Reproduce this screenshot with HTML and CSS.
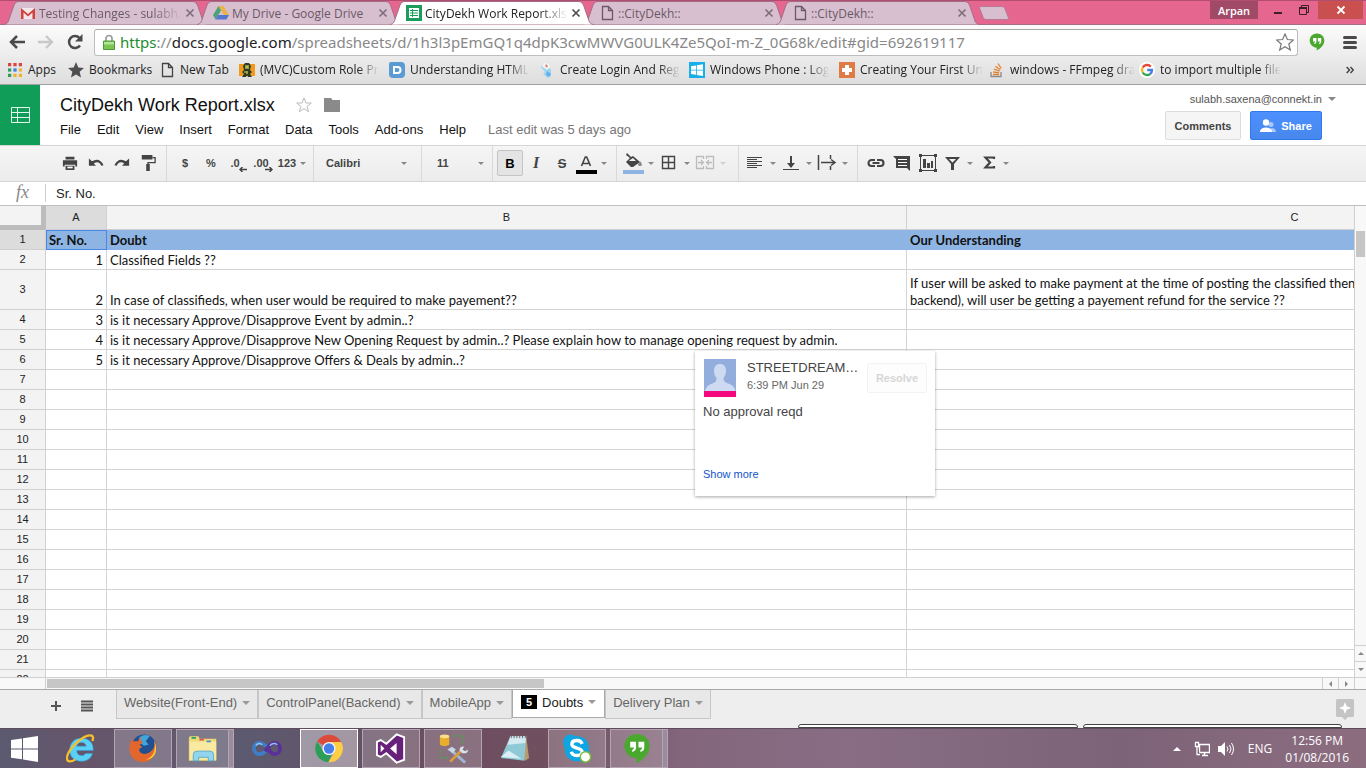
FILE: index.html
```html
<!DOCTYPE html>
<html lang="en">
<head>
<meta charset="utf-8">
<title>CityDekh Work Report.xlsx</title>
<link rel="stylesheet" href="styles.css">
</head>
<body>
<svg class="defs" aria-hidden="true">
  <defs>
    <symbol id="tabshape" viewBox="0 0 204 25" preserveAspectRatio="none"><path d="M0 24.5C4 24 4.500 21 5.500 18L10 5Q11.500 1.500 14 1.500H189Q192 1.500 193.500 5L198 18C199 21 199.500 24 203.500 24.500" stroke="#a56d85"/></symbol>
    <symbol id="cross" viewBox="0 0 10 10"><path d="M1.500 1.500l7 7M8.500 1.500l-7 7" fill="none" stroke="currentColor" stroke-width="1.700"/></symbol>
    <symbol id="page" viewBox="0 0 16 16"><path d="M3.500 1.500h6l4 4v9h-10zM9.500 1.500v4h4" fill="none" stroke="currentColor" stroke-width="1.300"/></symbol>
    <symbol id="bubble" viewBox="0 0 28 32"><path d="M14 1C6.500 1 1 6.500 1 13.500S6.500 26 13.500 26v5C21 28 27 21 27 13.500 27 6.500 21.500 1 14 1z" fill="#4ba82e"/><path d="M7 9h6v6c0 2.500-1.500 4-4 4.500v-2c1.300-.4 1.800-1.300 1.800-2.500H7zM15.500 9h6v6c0 2.500-1.500 4-4 4.500v-2c1.300-.4 1.800-1.300 1.800-2.500h-3.800z" fill="#fff"/></symbol>
  </defs>
</svg>

<header class="browser">
  <div class="tabstrip">
    <nav class="tabs" aria-label="Browser tabs">
      <div class="tab"><svg class="shape"><use href="#tabshape"/></svg>
        <svg class="fav" viewBox="0 0 16 16"><path d="M1 3h14v11H1z" fill="#f1e6ea"/><path d="M1 14V3l7 6 7-6v11h-2.500V7.500L8 11.500l-4.500-4V14z" fill="#d0433c"/></svg>
        <span class="title fade">Testing Changes - sulabh.</span><button class="close" aria-label="Close tab"><svg><use href="#cross"/></svg></button></div>
      <div class="tab"><svg class="shape"><use href="#tabshape"/></svg>
        <svg class="fav" viewBox="0 0 16 16"><path d="M5.500 1h5L16 10h-5z" fill="#e8b44a"/><path d="M5.500 1L0 10l2.500 4.500L8 5.500z" fill="#4da277"/><path d="M5 10h11l-2.500 4.500h-11z" fill="#5677cf"/></svg>
        <span class="title">My Drive - Google Drive</span><button class="close" aria-label="Close tab"><svg><use href="#cross"/></svg></button></div>
      <div class="tab active"><svg class="shape"><use href="#tabshape"/></svg>
        <svg class="fav" viewBox="0 0 16 16"><path d="M0 0h16v16H0z" fill="#1a9d5c"/><path d="M3 3h10v10H3z" fill="#fff"/><path d="M4 5.500h8M4 8h8M4 10.500h8M6.500 4v8" stroke="#1a9d5c"/></svg>
        <span class="title fade">CityDekh Work Report.xls</span><button class="close" aria-label="Close tab"><svg><use href="#cross"/></svg></button></div>
      <div class="tab"><svg class="shape"><use href="#tabshape"/></svg>
        <svg class="fav"><use href="#page"/></svg>
        <span class="title">::CityDekh::</span><button class="close" aria-label="Close tab"><svg><use href="#cross"/></svg></button></div>
      <div class="tab"><svg class="shape"><use href="#tabshape"/></svg>
        <svg class="fav"><use href="#page"/></svg>
        <span class="title">::CityDekh::</span><button class="close" aria-label="Close tab"><svg><use href="#cross"/></svg></button></div>
      <button class="newtab" aria-label="New tab"><svg viewBox="0 0 32 16"><path d="M3 1.500h21q2 0 2.800 2L30.500 13q.5 1.500-1.500 1.500H8q-2 0-2.800-2L1.500 3q-.5-1.500 1.500-1.500z" fill="#d8bfd0" stroke="#b87a97"/></svg></button>
    </nav>
    <div class="winctl">
      <button class="user">Arpan</button>
      <button class="min" aria-label="Minimize"><svg viewBox="0 0 10 10"><path d="M1 7h8v2H1z" fill="#3a1e2a"/></svg></button>
      <button class="max" aria-label="Restore"><svg viewBox="0 0 10 10"><path d="M.5 2.500h7v7h-7zM2.500 2V.500h7v7H8" fill="none" stroke="#3a1e2a"/><path d="M0 2h8v2H0z" fill="#3a1e2a"/></svg></button>
      <button class="quit" aria-label="Close window"><svg viewBox="0 0 10 10"><path d="M1.500 1.500l7 7M8.500 1.500l-7 7" stroke="#fff" stroke-width="1.800"/></svg></button>
    </div>
  </div>

  <div class="navbar">
    <button aria-label="Back"><svg viewBox="0 0 16 16"><path d="M16 8H2M8 2L2 8l6 6" fill="none" stroke="#4a4a4a" stroke-width="2.500"/></svg></button>
    <button aria-label="Forward"><svg viewBox="0 0 16 16"><path d="M0 8h14M8 2l6 6-6 6" fill="none" stroke="#c8c8c8" stroke-width="2.300"/></svg></button>
    <button aria-label="Reload"><svg viewBox="0 0 16 16"><path d="M13 11.500A6 6 0 1 1 12.500 4" fill="none" stroke="#4a4a4a" stroke-width="2.500"/><path d="M15.500 0v7.500H8z" fill="#4a4a4a"/></svg></button>
    <div class="omnibox">
      <svg class="lock" viewBox="0 0 12 16"><path d="M3 8V4.500a3 3 0 0 1 6 0V8" fill="none" stroke="#9a9a9a" stroke-width="1.700"/><path d="M.5 7h11v8.500H.5z" fill="#79c653" stroke="#4c9a35"/><path d="M1 8h10v2.500H1z" fill="#b4e39a"/></svg>
      <div class="url" role="textbox" aria-label="Address" contenteditable="true" spellcheck="false"><span class="secure">https</span>://<span class="host">docs.google.com</span>/spreadsheets/d/1h3l3pEmGQ1q4dpK3cwMWVG0ULK4Ze5QoI-m-Z_0G68k/edit#gid=692619117</div>
      <button class="star" aria-label="Bookmark this page"><svg viewBox="0 0 18 18"><path d="M9 1l2.400 5.500 6 .5-4.600 4 1.500 6L9 13.800 3.700 17l1.500-6L.6 7l6-.5z" fill="#fff" stroke="#777" stroke-width="1.200"/></svg></button>
    </div>
    <button class="ext" aria-label="Hangouts"><svg><use href="#bubble"/></svg></button>
    <button class="burger" aria-label="Menu"><svg viewBox="0 0 14 14"><path d="M1.500 2.500h11M1.500 7.500h11M1.500 12.500h11" stroke="#4a4a4a" stroke-width="3" stroke-linecap="round"/></svg></button>
  </div>

  <nav class="bookmarks" aria-label="Bookmarks">
    <a href="#" class="bm apps"><svg viewBox="0 0 13 13"><path d="M0 0h3v3H0zM5 0h3v3H5zM10 0h3v3h-3z" fill="#d9453d"/><path d="M0 5h3v3H0z" fill="#2f9e5b"/><path d="M5 5h3v3H5z" fill="#3f7de0"/><path d="M10 5h3v3h-3zM5 10h3v3H5zM10 10h3v3h-3z" fill="#eeb22b"/><path d="M0 10h3v3H0z" fill="#2f9e5b"/></svg><span>Apps</span></a>
    <a href="#" class="bm star"><svg viewBox="0 0 14 14"><path d="M7 0l2 4.800 5 .4-3.800 3.400 1.200 5L7 11l-4.400 2.600 1.200-5L0 5.200l5-.4z" fill="#4f4f4f"/></svg><span>Bookmarks</span></a>
    <a href="#" class="bm new"><svg viewBox="0 0 16 16"><use href="#page"/></svg><span>New Tab</span></a>
    <a href="#" class="bm"><svg viewBox="0 0 16 16"><path d="M0 2h16v12H0z" fill="#f39a1c"/><path d="M6 1h4l2 3-1 4 2 2-2 2 2 3H9l-1-2-1 2H3l2-3-2-2 2-2-1-4z" fill="#2e3a22"/><path d="M6 3h4v4H6zM7 9h2v3H7z" fill="#8da04d"/><path d="M7 5h2M5 10h2" stroke="#e8d96a"/></svg><span>(MVC)Custom Role Pr</span></a>
    <a href="#" class="bm"><svg viewBox="0 0 16 16"><path d="M2 0h10a4 4 0 0 1 4 4v8a4 4 0 0 1-4 4H4a4 4 0 0 1-4-4V2a2 2 0 0 1 2-2z" fill="#5b9bd3"/><path d="M5 5h3.500a3 3 0 0 1 0 6H5z" fill="none" stroke="#fff" stroke-width="2"/></svg><span>Understanding HTML</span></a>
    <a href="#" class="bm"><svg viewBox="0 0 16 16"><path d="M1 4l5 2 3-2 3 4v6l-3 2-5-4 2-2z" fill="#9ed3f2"/><path d="M5 1l4 1 2 3-3 3-4-3z" fill="#f4f7fa"/><path d="M7 2l2 2-1 2-2-2z" fill="#dd8a6d"/><path d="M8 9l4 3-2 3-3-2z" fill="#62b0e4"/></svg><span>Create Login And Reg</span></a>
    <a href="#" class="bm"><svg viewBox="0 0 16 16"><path d="M0 0h16v16H0z" fill="#17aeea"/><path d="M2 4.200l5-.8v4.300H2zM7.800 3.200L14 2.200v5.500H7.800zM2 8.500h5v4.200l-5-.8zM7.800 8.500H14V14l-6.200-1z" fill="#fff"/></svg><span>Windows Phone : Log</span></a>
    <a href="#" class="bm"><svg viewBox="0 0 16 16"><path d="M0 0h16v16H0z" fill="#e07b45"/><path d="M6 3h4v3h3v4h-3v3H6v-3H3V6h3z" fill="#fff"/></svg><span>Creating Your First Un</span></a>
    <a href="#" class="bm"><svg viewBox="0 0 16 16"><path d="M2 10v4.500h10V10" fill="none" stroke="#8b8b8b" stroke-width="1.300"/><path d="M4 12.500h6M4.200 10l6 .8M5 7.200l5.600 2M6.500 4.200l4.800 3.600M9 1.500l3.300 5" stroke="#e2822f" stroke-width="1.300"/></svg><span>windows - FFmpeg dra</span></a>
    <a href="#" class="bm"><svg viewBox="0 0 16 16"><circle cx="8" cy="8" r="8" fill="#fff"/><g fill="none" stroke-width="2.400"><path d="M11.800 4.600A5 5 0 0 0 3.700 5.500" stroke="#e2473a"/><path d="M3.700 5.500a5 5 0 0 0 0 5" stroke="#f2b822"/><path d="M3.700 10.500a5 5 0 0 0 7.600 1.300" stroke="#36a455"/><path d="M11.300 11.800A5 5 0 0 0 13 8H8.200" stroke="#4480ea"/></g></svg><span>to import multiple file</span></a>
    <button class="more" aria-label="More bookmarks"><svg viewBox="0 0 8 8"><path d="M.7 1L3.500 4 .7 7M4.500 1l2.800 3-2.800 3" fill="none" stroke="#444" stroke-width="1.500"/></svg></button>
  </nav>
</header>

<section class="dochead">
  <a href="#" class="logo" aria-label="Sheets home"><svg viewBox="0 0 19 16"><path d="M.5.500h18v15H.5zM.5 5.500h18M.5 10.500h18M6.500.500v15" fill="none" stroke="#e4f5ec"/></svg></a>
  <div class="docinfo">
    <div class="titlerow"><h1>CityDekh Work Report.xlsx</h1>
      <button aria-label="Star"><svg viewBox="0 0 16 16"><path d="M8 1l2 5h5.300l-4.200 3.400 1.500 5.300L8 11.600l-4.600 3.100 1.500-5.300L.7 6H6z" fill="none" stroke="#bbb"/></svg></button>
      <button aria-label="Move to folder"><svg viewBox="0 0 16 16"><path d="M0 1h7l1.500 2H16v12H0z" fill="#8a8a8a"/></svg></button>
    </div>
    <nav class="menus"><button>File</button><button>Edit</button><button>View</button><button>Insert</button><button>Format</button><button>Data</button><button>Tools</button><button>Add-ons</button><button>Help</button><a href="#">Last edit was 5 days ago</a></nav>
  </div>
  <div class="account">
    <button class="mail">sulabh.saxena@connekt.in<i class="arrow"></i></button>
    <div class="actions"><button class="comments">Comments</button>
      <button class="share"><svg viewBox="0 0 16 14"><circle cx="11" cy="5.500" r="2.500" fill="#a9c8fb"/><path d="M9 13q1-4 3-4 4 .5 4 4z" fill="#a9c8fb"/><circle cx="6" cy="3.500" r="3.200" fill="#fff"/><path d="M0 13v-1q1-3.500 6-3.500T12 12v1z" fill="#fff"/></svg>Share</button></div>
  </div>
</section>

<div class="toolbar" role="toolbar" aria-label="Formatting">
  <div class="group first">
    <button aria-label="Print"><svg viewBox="0 0 18 18"><path d="M4 2h10v3H4zM1 6h16v7h-2v-2H3v2H1zM4 12h10v5H4z" fill="#444"/><path d="M6 13h6v2H6z" fill="#fff"/></svg></button>
    <button aria-label="Undo"><svg viewBox="0 0 18 18"><path d="M1 4v8h8L6.500 9.500Q12 6 15 12l2.500-.5Q13 2 4.500 7z" fill="#444"/></svg></button>
    <button aria-label="Redo"><svg viewBox="0 0 18 18"><path d="M17 4v8H9l2.500-2.500Q6 6 3 12l-2.500-.5Q5 2 13.500 7z" fill="#444"/></svg></button>
    <button aria-label="Paint format"><svg viewBox="0 0 18 18"><path d="M2 0h12v5H2zM7 10h4v8H7z" fill="#444"/><path d="M14 3h3v5.500H9V10" fill="none" stroke="#444" stroke-width="1.500"/></svg></button>
  </div>
  <div class="group">
    <button>$</button><button>%</button>
    <button aria-label="Decrease decimals" class="dec">.0<svg viewBox="0 0 8 5"><path d="M8 2.500H1M3.500 0L1 2.500 3.500 5" fill="none" stroke="#444" stroke-width="1.500"/></svg></button>
    <button aria-label="Increase decimals" class="dec">.00<svg viewBox="0 0 8 5"><path d="M0 2.500h7M4.500 0L7 2.500 4.500 5" fill="none" stroke="#444" stroke-width="1.500"/></svg></button>
    <button class="fmt">123<i class="arrow"></i></button>
  </div>
  <div class="group pick font"><select aria-label="Font"><option>Calibri</option></select><i class="arrow"></i></div>
  <div class="group pick size"><select aria-label="Font size"><option>11</option></select><i class="arrow"></i></div>
  <div class="group style">
    <button class="on bold">B</button><button class="italic">I</button><button class="strike">S</button>
    <button class="drop" aria-label="Text color"><svg viewBox="0 0 22 22"><path d="M6.500 14L10.300 5h1.400l3.800 9M8 11.500h6" fill="none" stroke="#444" stroke-width="1.600"/><path d="M1 18h21v4H1z"/></svg><i class="arrow"></i></button>
  </div>
  <div class="group wide">
    <button class="drop" aria-label="Fill color"><svg viewBox="0 0 22 22"><path d="M5 1l4 4 2-1 7 6-7 5H9L4 10l4-4-4-3zM8 8l-1 1h7l-3-3z" fill="#444" fill-rule="evenodd"/><path d="M18 9q4 5 0 5t0-5z" fill="#888"/><path d="M1 18h21v4H1z" fill="#8db4e2"/></svg><i class="arrow"></i></button>
    <button class="drop" aria-label="Borders"><svg viewBox="0 0 22 22"><path d="M4.500 4.500h12v12h-12zM10.500 4.500v12M4.500 10.500h12" fill="none" stroke="#444" stroke-width="1.400"/></svg><i class="arrow"></i></button>
    <button class="drop faded" aria-label="Merge cells"><svg viewBox="0 0 22 22"><path d="M9.500 7V4.500h-7v12h7V14M12.500 7V4.500h7v12h-7V14M4 10.500h5M7 8l2.500 2.500L7 13M18 10.500h-5M15 8l-2.500 2.500L15 13" fill="none" stroke="#444" stroke-width="1.300"/></svg><i class="arrow"></i></button>
  </div>
  <div class="group">
    <button class="drop" aria-label="Horizontal align"><svg viewBox="0 0 22 22"><path d="M3 5.500h15M3 7.500h10M3 9.500h15M3 11.500h10M3 13.500h15M3 15.500h10" stroke="#444" stroke-width="1.100"/></svg><i class="arrow"></i></button>
    <button class="drop" aria-label="Vertical align"><svg viewBox="0 0 22 22"><path d="M10 4h2v7h3l-4 5-4-5h3zM3 17h16v1H3z" fill="#444"/></svg><i class="arrow"></i></button>
    <button class="drop" aria-label="Text wrapping"><svg viewBox="0 0 22 22"><path d="M2.500 3v15M14.500 3v4M14.500 14v4M5 10.500h14M15 7.500l4 3-4 3" fill="none" stroke="#444" stroke-width="1.500"/></svg><i class="arrow"></i></button>
  </div>
  <div class="group insert">
    <button aria-label="Insert link"><svg viewBox="0 0 18 18"><path d="M8 6H4.500a3 3 0 0 0 0 6H8M10 6h3.500a3 3 0 0 1 0 6H10M5.500 9h7" fill="none" stroke="#444" stroke-width="2.100"/></svg></button>
    <button aria-label="Insert comment"><svg viewBox="0 0 18 18"><path d="M0 2h17v15l-3-3H3V5z" fill="#444"/><path d="M5 5.500h9M5 8.500h9M5 11.500h9" stroke="#fff"/></svg></button>
    <button aria-label="Insert chart"><svg viewBox="0 0 18 18"><path d="M1.500 1.500h15v15h-15z" fill="none" stroke="#444"/><path d="M4 5h3v9H4zM8 9h3v5H8zM12 7h2v7h-2zM0 0h3v3H0zM15 0h3v3h-3zM0 15h3v3H0zM15 15h3v3h-3z" fill="#444"/></svg></button>
    <button class="drop" aria-label="Filter"><svg viewBox="0 0 22 22"><path d="M4 5h15l-6 7v6h-3v-6zM8 7l3.500 3.500L15 7z" fill="#444" fill-rule="evenodd"/></svg><i class="arrow"></i></button>
    <button class="drop" aria-label="Functions"><svg viewBox="0 0 22 22"><path d="M17 7V5.500H8.500l4.500 5-4.500 5H17V14" fill="none" stroke="#444" stroke-width="2.200"/></svg><i class="arrow"></i></button>
  </div>
</div>

<div class="formula"><label for="fx">fx</label><input id="fx" value="Sr. No."></div>

<main class="sheet">
  <div class="view">
    <table>
      <colgroup><col class="rowno"><col class="a"><col class="b"><col class="c"></colgroup>
      <thead><tr><td class="corner"></td><th class="sel">A</th><th>B</th><th>C</th></tr></thead>
      <tbody>
        <tr class="blue"><th class="sel">1</th><td class="cur">Sr. No.</td><td>Doubt</td><td>Our Understanding</td></tr>
        <tr><th>2</th><td class="n">1</td><td>Classified Fields ??</td><td></td></tr>
        <tr class="tall"><th>3</th><td class="n">2</td><td>In case of classifieds, when user would be required to make payement??</td><td>If user will be asked to make payment at the time of posting the classified then<br>backend), will user be getting a payement refund for the service ??</td></tr>
        <tr><th>4</th><td class="n">3</td><td>is it necessary Approve/Disapprove Event by admin..?</td><td></td></tr>
        <tr><th>5</th><td class="n">4</td><td>is it necessary Approve/Disapprove New Opening Request by admin..? Please explain how to manage opening request by admin.</td><td></td></tr>
        <tr><th>6</th><td class="n">5</td><td>is it necessary Approve/Disapprove Offers &amp; Deals by admin..?</td><td></td></tr>
        <tr><th>7</th><td></td><td></td><td></td></tr>
        <tr><th>8</th><td></td><td></td><td></td></tr>
        <tr><th>9</th><td></td><td></td><td></td></tr>
        <tr><th>10</th><td></td><td></td><td></td></tr>
        <tr><th>11</th><td></td><td></td><td></td></tr>
        <tr><th>12</th><td></td><td></td><td></td></tr>
        <tr><th>13</th><td></td><td></td><td></td></tr>
        <tr><th>14</th><td></td><td></td><td></td></tr>
        <tr><th>15</th><td></td><td></td><td></td></tr>
        <tr><th>16</th><td></td><td></td><td></td></tr>
        <tr><th>17</th><td></td><td></td><td></td></tr>
        <tr><th>18</th><td></td><td></td><td></td></tr>
        <tr><th>19</th><td></td><td></td><td></td></tr>
        <tr><th>20</th><td></td><td></td><td></td></tr>
        <tr><th>21</th><td></td><td></td><td></td></tr>
        <tr><th>22</th><td></td><td></td><td></td></tr>
      </tbody>
    </table>
    <aside class="note">
      <div class="who">
        <svg viewBox="0 0 32 38"><path d="M0 0h32v32H0z" fill="#93aedd"/><path d="M16 5c4 0 6 2.500 6 7 0 3-1 5-2.500 7 0 4 2 4.500 6 6 3 1.200 5 3 6 7H1c1-4 3-5.800 6-7 4-1.500 5.500-2 5.500-6C11 17 10 15 10 12c0-4.500 2-7 6-7z" fill="#cddaf1"/><path d="M0 32h32v6H0z" fill="#f50a7d"/></svg>
        <div class="meta"><b>STREETDREAM…</b><span>6:39 PM Jun 29</span></div>
        <button>Resolve</button>
      </div>
      <p>No approval reqd</p>
      <a href="#">Show more</a>
    </aside>
  </div>
  <div class="vscroll"><div class="thumb"></div><button aria-label="Scroll up"><i class="up"></i></button><button aria-label="Scroll down"><i class="down"></i></button></div>
</main>
<div class="hscroll"><div class="track"><div class="thumb"></div></div><button aria-label="Scroll left"><i class="left"></i></button><button aria-label="Scroll right"><i class="right"></i></button><span class="end"></span></div>

<footer class="sheetbar">
  <button class="tool" aria-label="Add sheet"><svg viewBox="0 0 12 12"><path d="M6 1v10M1 6h10" stroke="#555" stroke-width="2"/></svg></button>
  <button class="tool" aria-label="All sheets"><svg viewBox="0 0 12 12"><path d="M0 1.500h12M0 4.500h12M0 7.500h12M0 10.500h12" stroke="#555" stroke-width="2"/></svg></button>
  <nav class="sheets"><button>Website(Front-End)<i class="arrow"></i></button><button>ControlPanel(Backend)<i class="arrow"></i></button><button>MobileApp<i class="arrow"></i></button><button class="open"><span class="count">5</span>Doubts<i class="arrow"></i></button><button>Delivery Plan<i class="arrow"></i></button></nav>
  <button class="explore" aria-label="Explore"><svg viewBox="0 0 18 21"><path d="M1.500 0h15Q18 0 18 1.500v15q0 1.500-1.500 1.500H12l-3 3-3-3H1.500Q0 18 0 16.500v-15Q0 0 1.500 0z" fill="#c4c4c4"/><path d="M9 3l1.700 4.300L15 9l-4.300 1.700L9 15l-1.700-4.300L3 9l4.300-1.700z" fill="#fff"/></svg></button>
  <div class="peek"><i></i><i></i></div>
</footer>

<div class="taskbar">
  <button class="start" aria-label="Start"><svg viewBox="0 0 27 26"><path d="M0 4l11-1.500V12.500H0zM12 2.300L27 0v12.500H12zM0 13.500h11v9.700L0 21.700zM12 13.500h15V26l-15-2.500z" fill="#fff"/></svg></button>
  <button aria-label="Internet Explorer"><svg viewBox="0 0 32 32"><path d="M29 18H11.500c0 3.500 2 5.500 5 5.500 2 0 3.500-.8 4.300-2.300h7.400c-1.500 5.500-6 8.300-11.700 8.300C9 29.500 4 25 4 17.500S9 5 16.500 5C24.500 5 29.500 10 29 18zM21.500 13.500c-.3-2.500-2-4-4.900-4-2.800 0-4.800 1.500-5.100 4z" fill="#5bd0f7" fill-rule="evenodd" stroke="#2b9fd8" stroke-width=".6"/><path d="M28 8c3-6-2-8-9-4C10 9 1 20 1 26.500c0 4.500 5 4 9 1" fill="none" stroke="#f2c02c" stroke-width="2.400"/></svg></button>
  <button class="run" aria-label="Firefox"><svg viewBox="0 0 32 32"><circle cx="17" cy="14" r="13" fill="#204f92"/><path d="M12 4q6-4 11-1l-4 5 3 4-5 1-4-3z" fill="#3fa6dc"/><path d="M28 7c4 8 2 22-11 23.500C7 31 1 24 1.500 15c.2-4 1.500-7 3-9.500l1.500 3q3-1 5 0c0-2 1-4 3-5-1 3 0 5 2 6l-4 3c2 0 3 1 3 2.500-2 0-3 1-3 3 1 4 7 5 11 2 5-3 6-7 5-13z" fill="#e3672c"/><path d="M28 8c2 10-1 17-9 20 9 0 14-9 9-20z" fill="#f9c638"/></svg></button>
  <button class="run stack" aria-label="File Explorer"><svg viewBox="0 0 34 32"><path d="M1 4l1-2h10l1 3h19v25H1z" fill="#f0d878"/><path d="M2 8h30v21H2z" fill="#fae9a0"/><path d="M4 3h5v2H4z" fill="#22a55a"/><path d="M13 5h5v2h-5z" fill="#d95b46"/><path d="M21 7h5v2h-5z" fill="#4493ce"/><path d="M6 30v-7q0-4 4-4h15q4 0 4 4v7h-6v-4H12v4z" fill="#93d4ee" stroke="#51a8cf"/></svg></button>
  <button aria-label="Visual Studio 2010"><svg viewBox="0 0 32 32"><path d="M17 16c-4-5-6-6-9-6-8 0-8 12 0 12 3 0 5-1 9-6" fill="none" stroke="#3f7cc8" stroke-width="4"/><path d="M14 19c5-7 7-9 10-9 8 0 8 12 0 12-3 0-5-3-9-8" fill="none" stroke="#5a309b" stroke-width="4"/><path d="M4 13q3-4 7-1M19 13q4-4 8-1" stroke="#8fc2ee" fill="none" stroke-width="1.500"/></svg></button>
  <button class="run front" aria-label="Chrome"><svg viewBox="0 0 32 32"><path d="M16 16L3.400 8.500A14.700 14.700 0 0 1 29 9H16z" fill="#dc4a3c"/><path d="M16 9h13a14.700 14.700 0 0 1-13.500 21.700L22 19.500z" fill="#fdcd44"/><path d="M3.400 8.500L10 19.500q4 5 9 2.500l-4 8.700A14.700 14.700 0 0 1 3.400 8.500z" fill="#2c9e57"/><circle cx="16" cy="16" r="7" fill="#f3f3f3"/><circle cx="16" cy="16" r="5.500" fill="#467feb"/></svg></button>
  <button class="run" aria-label="Visual Studio"><svg viewBox="0 0 32 32"><path d="M22 1l8 3v24l-8 3-11-10-6 4-4-2V9l4-2 6 4z" fill="#68217a" stroke="#fff" stroke-width="2"/><path d="M22 10v12l-7-6zM5 12v8l4-4z" fill="#fff"/></svg></button>
  <button class="run" aria-label="SQL tools"><svg viewBox="0 0 32 32"><path d="M2 3v9q5 3 10 0V3z" fill="#e9ae2b"/><ellipse cx="7" cy="3" rx="5" ry="2" fill="#fbe08c"/><path d="M16 2.500h10v9M2.500 18v8H12" fill="none" stroke="#3fae3f" stroke-width="1.500" stroke-dasharray="2 1.500"/><path d="M14 18l15 13" stroke="#9fb6d2" stroke-width="3"/><path d="M10 17l5-3 4 3-3 4z" fill="#c8d7e8"/><path d="M13 30l12-12" stroke="#dc9c3c" stroke-width="3"/><path d="M23 18q0-5 5-4l-2 3 3 2 3-2q0 5-6 4z" fill="#d9e2ee"/></svg></button>
  <button aria-label="Notepad"><svg viewBox="0 0 32 32"><path d="M11 3l17 1 3 22-4 3z" fill="#b89a6d"/><path d="M11 3h17l-2 26-25-3z" fill="#8fc9d6"/><path d="M11 3h17l-1 7L8 12z" fill="#d4eaf0"/><path d="M1 25l8-7 14 9z" fill="#d9eff4"/><path d="M12 2v3M15 2v3M18 2v3M21 2v3M24 2v3M27 2v3" stroke="#666"/></svg></button>
  <button class="run" aria-label="Skype"><svg viewBox="0 0 32 32"><path d="M9 1q3 0 5 2C24 2 30 9 28.500 18c4 7-2 14-9 11.500C10 31 2 25 3 15-1 8 3 1 9 1z" fill="#0da6e3"/><path d="M21.500 11c-1-2.500-3-3.500-5.500-3.500-3.500 0-5.500 1.500-5.500 4 0 5 11 3 11 8 0 2.500-2 4-5.500 4-3 0-5.500-1-6-4" fill="none" stroke="#fff" stroke-width="3.600"/><circle cx="25" cy="25" r="5.500" fill="#fff" stroke="#7ebc34" stroke-width="1.500"/></svg></button>
  <button class="run stack" aria-label="Hangouts"><svg class="talk"><use href="#bubble"/></svg></button>
  <div class="tray">
    <button aria-label="Hidden icons"><i class="up"></i></button>
    <svg viewBox="0 0 16 16"><path d="M5.500 3.500h10v8h-10zM8 14.500h6M10.500 12v2.500" fill="none" stroke="#fff" stroke-width="1.400"/><path d="M1.500 1.500h3v4h-3zM3 6v7.500h3" fill="#6c5668" stroke="#fff" stroke-width="1.300"/></svg>
    <svg viewBox="0 0 16 16"><path d="M0 5h3l4-4v14l-4-4H0z" fill="#fff"/><path d="M9 5.500q2 2.500 0 5M11.500 4q3 4 0 8M13.500 2q4 6 0 12" fill="none" stroke="#fff"/></svg>
    <span class="lang">ENG</span>
    <time>12:56 PM<br>01/08/2016</time>
  </div>
</div>
</body>
</html>
```
FILE: styles.css
```css
* { box-sizing: border-box; }
html, body { height: 100%; margin: 0; }
body {
  display: flex;
  flex-direction: column;
  min-height: 100vh;
  overflow: hidden;
  background: #fff;
  font-family: "Liberation Sans", Arial, sans-serif;
  font-size: 13px;
  color: #222;
}
button, input, select { font: inherit; color: inherit; border: 0; background: none; padding: 0; margin: 0; }
button { display: flex; align-items: center; justify-content: center; white-space: nowrap; }
a { color: inherit; text-decoration: none; }
svg { display: block; flex: none; }
.defs { position: absolute; width: 0; height: 0; }
.arrow { flex: none; width: 0; height: 0; border: 3px solid transparent; border-top-color: #888; border-bottom: 0; }

/* browser chrome */
.browser { flex: none; font-family: "Open Sans", "Noto Sans", sans-serif; font-size: 12px; border-bottom: 1px solid #a0a0a0; }
.tabstrip { display: flex; height: 25px; background: #e5668f; border-top: 1px solid #b14d70; box-shadow: inset 0 -1px #a56d85; }
.tabs { display: flex; flex: 1; min-width: 0; padding-left: 8px; }
.tab { position: relative; display: flex; align-items: center; flex: 0 1 193px; min-width: 0; padding: 0 6px 0 12px; color: #6a5a66; }
.tab .shape { position: absolute; left: -4px; top: -1px; width: 204px; height: 25px; fill: #d8bfd0; }
.tab.active { z-index: 1; color: #222; }
.tab.active .shape { fill: #fff; }
.tab .fav { position: relative; width: 16px; height: 16px; margin-right: 3px; }
.title { position: relative; flex: 1; overflow: hidden; white-space: nowrap; }
.title.fade { mask-image: linear-gradient(90deg, #000 80%, transparent); }
.close { position: relative; width: 10px; height: 10px; margin: 0 0 0 3px; opacity: 0.8; }
.close svg { width: 10px; height: 10px; }
.newtab svg { width: 32px; height: 16px; margin-left: 5px; }
.winctl { display: flex; height: 18px; padding-right: 3px; }
.user { width: 48px; margin-right: 7px; background: #a04a68; color: #fff; font-size: 11px; font-weight: 600; }
.min, .max { width: 26px; }
.quit { width: 45px; margin-left: 1px; background: #c9504f; }
.winctl svg { width: 10px; height: 10px; }

.navbar { display: flex; align-items: center; height: 32px; padding: 2px 8px 0 7px; background: linear-gradient(#fbfbfb, #ececec); }
.navbar > button { width: 20px; margin-right: 9px; }
.navbar > button svg { width: 16px; height: 16px; }
.omnibox { display: flex; align-items: center; flex: 1; height: 27px; min-width: 0; padding: 0 3px 0 8px; background: #fff; border: 1px solid #bdbdbd; border-top-color: #a8a8a8; border-radius: 3px; }
.lock { width: 12px; height: 16px; margin-right: 5px; }
.url { flex: 1; overflow: hidden; white-space: nowrap; font-family: "Noto Sans", sans-serif; font-size: 15px; line-height: 24px; color: #888; outline: 0; }
.secure { color: #1d8d2d; }
.host { color: #222; }
.omnibox .star svg { width: 18px; height: 18px; }
.navbar > .ext { width: 16px; margin: 0 17px 0 11px; }
.navbar > .ext svg { width: 16px; height: 18px; }
.navbar > .burger { width: 16px; margin: 0; }
.navbar > .burger svg { width: 14px; height: 14px; }

.bookmarks { display: flex; align-items: center; height: 27px; padding: 0 8px 2px; background: linear-gradient(#ebebeb, #dedede); color: #222; }
.bm { display: flex; align-items: center; flex: 0 1 150px; min-width: 0; }
.bm svg { width: 16px; height: 16px; margin-right: 5px; }
.bm span { overflow: hidden; white-space: nowrap; mask-image: linear-gradient(90deg, #000 82%, transparent); }
.bm.apps { flex-basis: 60px; }
.bm.star { flex-basis: 91px; }
.bm.new { flex-basis: 80px; color: #444; }
.bm.apps span, .bm.star span, .bm.new span { mask-image: none; color: #222; }
.bm.apps svg { width: 14px; height: 14px; margin-right: 6px; }
.more { margin-left: auto; }
.more svg { width: 8px; height: 8px; margin-right: 4px; }

/* document header */
.dochead { display: flex; flex: none; height: 60px; }
.logo { display: flex; align-items: center; justify-content: center; width: 40px; background: #0f9d58; }
.logo svg { width: 19px; height: 16px; }
.docinfo { flex: 1; padding: 8px 0 0 20px; color: #111; }
.titlerow { display: flex; align-items: center; gap: 12px; height: 24px; }
h1 { margin: 0 9px 0 0; font-size: 18px; font-weight: 400; }
.titlerow svg { width: 16px; height: 16px; }
.menus { display: flex; align-items: center; gap: 16px; height: 24px; white-space: nowrap; }
.menus a { margin-left: 6px; color: #777; }
.account { display: flex; flex-direction: column; align-items: flex-end; padding: 5px 30px 0 0; }
.mail { height: 18px; font-size: 11px; color: #555; }
.mail .arrow { margin-left: 6px; border-width: 4px 4px 0; }
.actions { display: flex; gap: 9px; margin: 3px 14px 0 0; font-size: 11px; font-weight: 700; }
.comments { width: 76px; height: 29px; background: #f5f5f5; border: 1px solid #dcdcdc; border-radius: 2px; color: #444; }
.share { width: 72px; height: 29px; gap: 5px; background: linear-gradient(#4d90fe, #4787ed); border: 1px solid #3079ed; border-radius: 2px; color: #fff; }
.share svg { width: 16px; height: 14px; }

/* formatting toolbar */
.toolbar { display: flex; flex: none; height: 37px; background: linear-gradient(#f5f5f5, #ececec); border: 1px solid #d5d5d5; border-width: 1px 0; color: #444; font-size: 11px; font-weight: 700; }
.group { display: flex; align-items: center; padding: 0 5px 1px; border-left: 1px solid #d9d9d9; }
.group.first { border: 0; padding-left: 57px; }
.group.wide { padding-right: 8px; }
.group button { width: 26px; height: 26px; }
.group button svg { width: 16px; height: 16px; }
.group .fmt { width: 32px; gap: 4px; }
.group .dec { position: relative; padding-right: 4px; }
.group .dec svg { position: absolute; right: 3px; bottom: 4px; width: 8px; height: 5px; }
.group .drop { width: 36px; justify-content: flex-start; }
.insert button svg { width: 18px; height: 18px; }
.group .drop svg { width: 22px; height: 22px; margin-right: 4px; }
.faded { opacity: 0.3; }
.pick { position: relative; }
.pick select { width: 100%; height: 26px; padding-left: 7px; appearance: none; }
.pick .arrow { position: absolute; right: 14px; }
.font { width: 108px; padding-left: 5px; }
.size { width: 71px; padding-left: 8px; }
.size .arrow { right: 8px; }
.group.style { padding-left: 4px; }
.group .on { background: #e4e4e4; border: 1px solid #c4c4c4; border-radius: 2px; color: #000; }
.bold, .strike { font-size: 13px; }
.italic { font-family: "Liberation Serif", serif; font-style: italic; font-size: 16px; }
.strike { text-decoration: line-through; }

.formula { display: flex; flex: none; align-items: center; height: 23px; padding-bottom: 1px; }
.formula label { width: 46px; height: 18px; border-right: 1px solid #ccc; text-align: center; font: italic 18px/16px "Liberation Serif", serif; color: #888; }
.formula input { flex: 1; padding-left: 10px; outline: 0; }

/* grid */
.sheet { display: flex; flex: 1; min-height: 0; border-top: 1px solid #c0c0c0; }
.view { position: relative; flex: 1; min-width: 0; overflow: hidden; }
table { width: 1683px; border-spacing: 0; table-layout: fixed; }
.rowno { width: 46px; }
.a { width: 61px; }
.b { width: 800px; }
.c { width: 776px; }
th { padding: 0; height: 20px; background: #f3f3f3; border: solid #d0d0d0; border-width: 0 1px 1px 0; font-size: 11px; font-weight: 400; line-height: 17px; vertical-align: middle; }
thead th { height: 24px; }
th.sel { background: #dcdcdc; }
td { padding: 0 3px; height: 20px; border: solid #d4d4d4; border-width: 0 1px 1px 0; font-family: Lato, Carlito, sans-serif; font-size: 13px; line-height: 17px; vertical-align: bottom; white-space: nowrap; color: #111; }
.corner { background: #f3f3f3; border: solid #bcbcbc; border-width: 0 5px 5px 0; }
.n { text-align: right; }
.tall td { height: 40px; }
.blue td { background: #8db4e2; border-color: #8db4e2; font-weight: 700; }
.blue td.cur { border-color: #4a86e8; box-shadow: inset 1px 1px #4a86e8; }

.vscroll { display: flex; flex-direction: column; justify-content: flex-end; width: 12px; border-left: 1px solid #d0d0d0; background: #f8f8f8; padding-top: 25px; }
.vscroll .thumb { width: 9px; height: 26px; margin: 0 0 auto 1px; background: #c6c6c6; }
.vscroll button { height: 16px; border-top: 1px solid #d0d0d0; }
.up, .down, .left, .right { border: 3px solid transparent; }
.up { border-bottom-color: #888; border-top: 0; }
.down { border-top-color: #888; border-bottom: 0; }
.left { border-right-color: #888; border-left: 0; }
.right { border-left-color: #888; border-right: 0; }
.hscroll { display: flex; flex: none; height: 13px; background: #f8f8f8; border-top: 1px solid #d0d0d0; border-bottom: 1px solid #a8a8a8; }
.track { flex: 1; margin-left: 45px; padding: 1px; border-left: 1px solid #d0d0d0; }
.hscroll .thumb { width: 39%; height: 9px; background: #c6c6c6; }
.hscroll button { width: 16px; border-left: 1px solid #d0d0d0; }
.end { width: 12px; border-left: 1px solid #d0d0d0; }

.note { position: absolute; left: 695px; top: 145px; width: 240px; height: 145px; padding: 8px; background: #fff; box-shadow: 0 1px 3px rgba(0, 0, 0, 0.35); color: #444; }
.who { display: flex; }
.who svg { width: 32px; height: 38px; margin: 0 11px 0 1px; }
.meta { flex: 1; line-height: 17px; }
.meta b { display: block; font-weight: 400; }
.meta span { font-size: 11px; color: #666; }
.who button { width: 60px; height: 30px; margin: 4px 0 0; border: 1px solid #f3f3f3; border-radius: 2px; background: #fdfdfd; color: #d6d6d6; font-size: 11px; font-weight: 700; }
.note p { margin: 7px 0 46px; line-height: 16px; }
.note a { font-size: 11px; line-height: 14px; color: #15c; }

/* sheet tabs */
.sheetbar { position: relative; display: flex; flex: none; height: 38px; padding: 0 12px 0 40px; background: #eee; }
.tool { width: 31px; height: 32px; }
.tool svg { width: 12px; height: 12px; }
.sheets { display: flex; margin-left: 14px; color: #666; }
.sheets button { height: 29px; padding: 0 7px 3px; background: #e8e8e8; border: 1px solid #c6c6c6; border-top: 0; }
.sheets .arrow { margin-left: 5px; border-width: 4px 4px 0; border-top-color: #999; }
.sheets .open { height: 28px; padding: 0 8px 3px; background: #fff; border-color: #aaa; color: #222; }
.count { width: 16px; height: 14px; margin-right: 5px; background: #000; color: #fff; font-size: 11px; font-weight: 700; line-height: 14px; }
.explore { margin: 9px 0 0 auto; height: 21px; }
.explore svg { width: 18px; height: 21px; }
.peek { position: absolute; right: 24px; bottom: 0; display: flex; gap: 5px; }
.peek i { width: 280px; height: 4px; border: 1px solid #444; border-radius: 3px 3px 0 0; background: #fff; }
.peek i + i { width: 259px; }

/* taskbar */
.taskbar { display: flex; flex: none; gap: 4px; height: 40px; background: linear-gradient(90deg, #5b5a70 0, #67556a 6%, #5c5a70 18%, #6c4d5f 32%, #70505f 40%, #83667c 50%, #886d84 62%, #7d6378 82%, #8c6d80 100%); border-top: 1px solid #5e4c5c; }
.taskbar > button { width: 58px; height: 39px; }
.taskbar > button svg { width: 30px; height: 31px; }
.taskbar > .start { width: 48px; }
.taskbar > .start svg { width: 27px; height: 26px; }
.taskbar > .run { border: 1px solid #b3a5b3; background: rgba(255, 255, 255, 0.2); }
.taskbar > .front { border-color: #fff; background: rgba(255, 255, 255, 0.4); }
.taskbar > .stack { box-shadow: inset -4px 0 rgba(60, 40, 60, 0.2), inset -5px 0 #b3a5b3; padding-right: 4px; }
.tray { display: flex; align-items: center; margin-left: auto; padding-right: 17px; color: #fff; font-family: "Open Sans", sans-serif; font-size: 12px; line-height: 17px; white-space: nowrap; }
.tray svg { width: 16px; height: 16px; margin-right: 8px; }
.tray .up { border-bottom-color: #fff; border-width: 0 4px 4px; }
.tray button { margin-right: 13px; }
.lang { margin: 0 13px 0 6px; }
time { text-align: center; }
```
